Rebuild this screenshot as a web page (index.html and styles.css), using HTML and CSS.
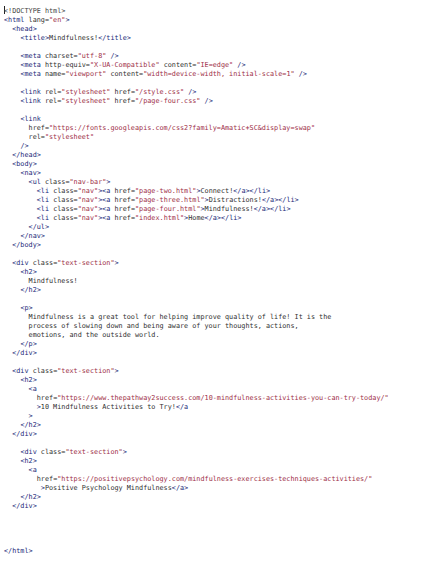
FILE: index.html
```html
<!DOCTYPE html>
<html lang="en">
<head>
<meta charset="utf-8">
<title>Mindfulness source</title>
<link rel="stylesheet" href="styles.css">
</head>
<body>
<pre class="code"><span class="cursor"></span><span class="d">&lt;!DOCTYPE html&gt;</span>
<span class="t">&lt;html</span> <span class="a">lang</span>=<span class="s">"en"</span><span class="t">&gt;</span>
  <span class="t">&lt;head&gt;</span>
    <span class="t">&lt;title&gt;</span><span class="x">Mindfulness!</span><span class="t">&lt;/title&gt;</span>

    <span class="t">&lt;meta</span> <span class="a">charset</span>=<span class="s">"utf-8"</span> <span class="t">/&gt;</span>
    <span class="t">&lt;meta</span> <span class="a">http-equiv</span>=<span class="s">"X-UA-Compatible"</span> <span class="a">content</span>=<span class="s">"IE=edge"</span> <span class="t">/&gt;</span>
    <span class="t">&lt;meta</span> <span class="a">name</span>=<span class="s">"viewport"</span> <span class="a">content</span>=<span class="s">"width=device-width, initial-scale=1"</span> <span class="t">/&gt;</span>

    <span class="t">&lt;link</span> <span class="a">rel</span>=<span class="s">"stylesheet"</span> <span class="a">href</span>=<span class="s">"/style.css"</span> <span class="t">/&gt;</span>
    <span class="t">&lt;link</span> <span class="a">rel</span>=<span class="s">"stylesheet"</span> <span class="a">href</span>=<span class="s">"/page-four.css"</span> <span class="t">/&gt;</span>

    <span class="t">&lt;link</span>
      <span class="a">href</span>=<span class="s">"https://fonts.googleapis.com/css2?family=Amatic+SC&amp;display=swap"</span>
      <span class="a">rel</span>=<span class="s">"stylesheet"</span>
    <span class="t">/&gt;</span>
  <span class="t">&lt;/head&gt;</span>
  <span class="t">&lt;body&gt;</span>
    <span class="t">&lt;nav&gt;</span>
      <span class="t">&lt;ul</span> <span class="a">class</span>=<span class="s">"nav-bar"</span><span class="t">&gt;</span>
        <span class="t">&lt;li</span> <span class="a">class</span>=<span class="s">"nav"</span><span class="t">&gt;&lt;a</span> <span class="a">href</span>=<span class="s">"page-two.html"</span><span class="t">&gt;</span><span class="x">Connect!</span><span class="t">&lt;/a&gt;&lt;/li&gt;</span>
        <span class="t">&lt;li</span> <span class="a">class</span>=<span class="s">"nav"</span><span class="t">&gt;&lt;a</span> <span class="a">href</span>=<span class="s">"page-three.html"</span><span class="t">&gt;</span><span class="x">Distractions!</span><span class="t">&lt;/a&gt;&lt;/li&gt;</span>
        <span class="t">&lt;li</span> <span class="a">class</span>=<span class="s">"nav"</span><span class="t">&gt;&lt;a</span> <span class="a">href</span>=<span class="s">"page-four.html"</span><span class="t">&gt;</span><span class="x">Mindfulness!</span><span class="t">&lt;/a&gt;&lt;/li&gt;</span>
        <span class="t">&lt;li</span> <span class="a">class</span>=<span class="s">"nav"</span><span class="t">&gt;&lt;a</span> <span class="a">href</span>=<span class="s">"index.html"</span><span class="t">&gt;</span><span class="x">Home</span><span class="t">&lt;/a&gt;&lt;/li&gt;</span>
      <span class="t">&lt;/ul&gt;</span>
    <span class="t">&lt;/nav&gt;</span>
  <span class="t">&lt;/body&gt;</span>

  <span class="t">&lt;div</span> <span class="a">class</span>=<span class="s">"text-section"</span><span class="t">&gt;</span>
    <span class="t">&lt;h2&gt;</span>
      <span class="x">Mindfulness!</span>
    <span class="t">&lt;/h2&gt;</span>

    <span class="t">&lt;p&gt;</span>
      <span class="x">Mindfulness is a great tool for helping improve quality of life! It is the</span>
      <span class="x">process of slowing down and being aware of your thoughts, actions,</span>
      <span class="x">emotions, and the outside world.</span>
    <span class="t">&lt;/p&gt;</span>
  <span class="t">&lt;/div&gt;</span>

  <span class="t">&lt;div</span> <span class="a">class</span>=<span class="s">"text-section"</span><span class="t">&gt;</span>
    <span class="t">&lt;h2&gt;</span>
      <span class="t">&lt;a</span>
        <span class="a">href</span>=<span class="s">"https://www.thepathway2success.com/10-mindfulness-activities-you-can-try-today/"</span>
        <span class="t">&gt;</span><span class="x">10 Mindfulness Activities to Try!</span><span class="t">&lt;/a</span>
      <span class="t">&gt;</span>
    <span class="t">&lt;/h2&gt;</span>
  <span class="t">&lt;/div&gt;</span>

    <span class="t">&lt;div</span> <span class="a">class</span>=<span class="s">"text-section"</span><span class="t">&gt;</span>
    <span class="t">&lt;h2&gt;</span>
      <span class="t">&lt;a</span>
        <span class="a">href</span>=<span class="s">"https://positivepsychology.com/mindfulness-exercises-techniques-activities/"</span>
         <span class="t">&gt;</span><span class="x">Positive Psychology Mindfulness</span><span class="t">&lt;/a&gt;</span>
    <span class="t">&lt;/h2&gt;</span>
  <span class="t">&lt;/div&gt;</span>




<span class="t">&lt;/html&gt;</span></pre>
</body>
</html>
```

FILE: styles.css
```css
html, body {
  margin: 0;
  padding: 0;
  background: #ffffff;
}

.code {
  margin: 0;
  padding: 6px 0 0 4px;
  font-family: "DejaVu Sans Mono", "Liberation Mono", monospace;
  font-size: 6.8px;
  line-height: 9px;
  color: #2f2f2f;
  white-space: pre;
}

.cursor {
  display: inline-block;
  width: 0;
  height: 8px;
  border-left: 1px solid #222;
  vertical-align: -1px;
  margin-right: -1px;
}

.d { color: #444444; }
.t { color: #1a2878; }
.a { color: #303030; }
.s { color: #9e2f48; }
.x { color: #303030; }
```
